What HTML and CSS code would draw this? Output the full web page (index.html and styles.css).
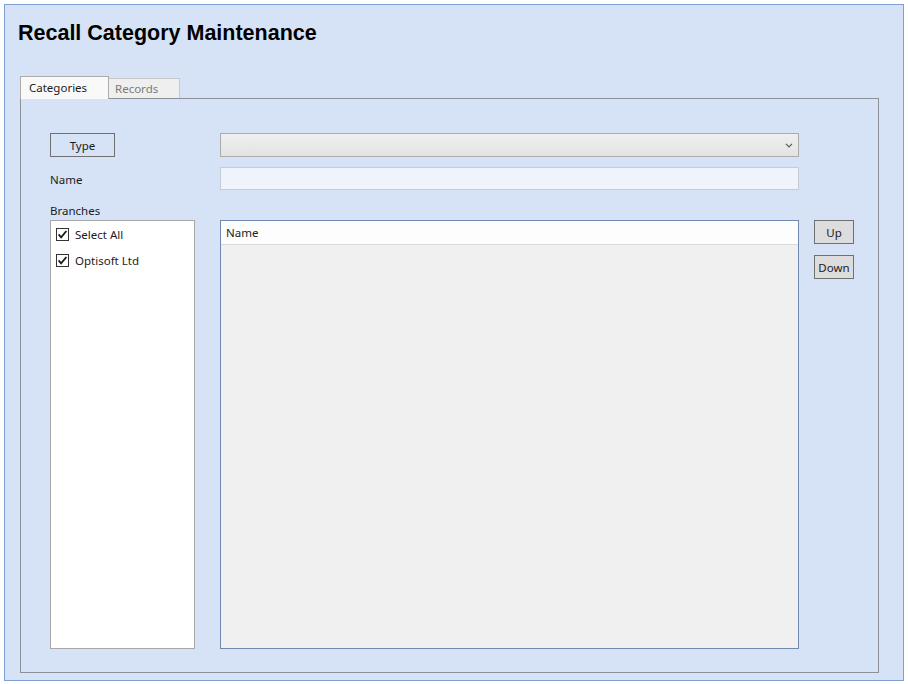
FILE: index.html
```html
<!DOCTYPE html>
<html>
<head>
<meta charset="utf-8">
<title>Recall Category Maintenance</title>
<link rel="stylesheet" href="styles.css">
</head>
<body>
<div class="window">
  <h1 class="title">Recall Category Maintenance</h1>
  <div class="tabs">
    <div class="tabstrip">
      <div class="tab tab-active">Categories</div>
      <div class="tab tab-inactive">Records</div>
    </div>
    <div class="panel">
      <div class="row row-type">
        <div class="label-col"><button class="btn btn-type">Type</button></div>
        <div class="combo">
          <svg class="chev" width="8" height="5" viewBox="0 0 8 5"><path d="M1 0.8 L4 3.8 L7 0.8" fill="none" stroke="#5a5a5a" stroke-width="1.2"/></svg>
        </div>
      </div>
      <div class="row row-name">
        <div class="label-col">Name</div>
        <div class="textbox"></div>
      </div>
      <div class="branches-label">Branches</div>
      <div class="main">
        <div class="list">
          <div class="item">
            <svg class="check" width="13" height="13" viewBox="0 0 13 13"><rect x="0.5" y="0.5" width="12" height="12" fill="#fff" stroke="#333"/><path d="M2.6 6.4 L5.1 9.3 L10.4 3" fill="none" stroke="#1a1a1a" stroke-width="1.8"/></svg>
            <span>Select All</span>
          </div>
          <div class="item">
            <svg class="check" width="13" height="13" viewBox="0 0 13 13"><rect x="0.5" y="0.5" width="12" height="12" fill="#fff" stroke="#333"/><path d="M2.6 6.4 L5.1 9.3 L10.4 3" fill="none" stroke="#1a1a1a" stroke-width="1.8"/></svg>
            <span>Optisoft Ltd</span>
          </div>
        </div>
        <div class="grid">
          <div class="grid-header">Name</div>
        </div>
        <div class="side-buttons">
          <button class="btn btn-side">Up</button>
          <button class="btn btn-side">Down</button>
        </div>
      </div>
    </div>
  </div>
</div>
</body>
</html>
```
FILE: styles.css
```css
html, body {
  margin: 0;
  padding: 0;
  background: #ffffff;
  overflow: hidden;
}
body {
  font-family: "Noto Sans", "Open Sans", sans-serif;
  font-size: 11.5px;
  color: #1b1b1b;
}
.window {
  margin: 4px 4px 0 4px;
  height: 677px;
  box-sizing: border-box;
  border: 1px solid #7f9fd2;
  background: #d6e3f6;
  padding: 16px 24px 7px 15px;
  display: flex;
  flex-direction: column;
}
.title {
  margin: 0 0 31px -2px;
  font-family: "Liberation Sans", Arial, sans-serif;
  font-size: 21.5px;
  line-height: 24px;
  font-weight: bold;
  color: #000;
}
.tabs {
  flex: 1;
  display: flex;
  flex-direction: column;
}
.tabstrip {
  display: flex;
  align-items: flex-end;
  height: 22px;
}
.tab {
  box-sizing: border-box;
  line-height: 18px;
}
.tab-active {
  width: 89px;
  height: 23px;
  margin-bottom: -1px;
  position: relative;
  z-index: 1;
  background: #f9f9f9;
  border: 1px solid #acacac;
  border-bottom: none;
  padding: 2px 0 0 8px;
  color: #1b1b1b;
}
.tab-inactive {
  width: 71px;
  height: 20px;
  background: #efefef;
  border: 1px solid #c8c8c8;
  border-left: none;
  border-bottom: none;
  padding: 1px 0 0 6px;
  color: #7a7a7a;
}
.panel {
  flex: 1;
  border: 1px solid #8b9099;
  padding: 34px 0 23px 29px;
  display: flex;
  flex-direction: column;
}
.row {
  display: flex;
  align-items: center;
}
.row-name {
  margin-top: 10px;
}
.label-col {
  width: 170px;
  flex-shrink: 0;
  padding-top: 2px;
  box-sizing: border-box;
}
.row-type .label-col {
  padding-top: 0;
}
.btn {
  font-family: "Noto Sans", "Open Sans", sans-serif;
  font-size: 11.5px;
  color: #1b1b1b;
  box-sizing: border-box;
  border: 1px solid #707070;
  padding: 0;
  margin: 0;
}
.btn-type {
  width: 65px;
  height: 24px;
  background: #d6e3f6;
}
.combo {
  width: 579px;
  height: 24px;
  box-sizing: border-box;
  border: 1px solid #acacac;
  background: linear-gradient(#efefef, #e3e3e3);
  display: flex;
  align-items: center;
  justify-content: flex-end;
  padding-right: 5px;
}
.textbox {
  width: 579px;
  height: 23px;
  box-sizing: border-box;
  border: 1px solid #c4ccd8;
  background: #eef3fc;
}
.branches-label {
  margin: 13px 0 1px;
  line-height: 16px;
}
.main {
  flex: 1;
  display: flex;
  align-items: flex-start;
}
.list {
  width: 145px;
  height: 100%;
  box-sizing: border-box;
  border: 1px solid #a8a8a8;
  background: #ffffff;
  padding: 7px 0 0 5px;
  display: flex;
  flex-direction: column;
  gap: 13px;
}
.item {
  display: flex;
  align-items: center;
  height: 13px;
  line-height: 13px;
}
.check {
  margin-right: 6px;
  flex-shrink: 0;
}
.grid {
  margin-left: 25px;
  width: 579px;
  height: 100%;
  box-sizing: border-box;
  border: 1px solid #6f89b0;
  background: #f0f0f0;
}
.grid-header {
  height: 24px;
  box-sizing: border-box;
  background: #fdfdfd;
  border-bottom: 1px solid #d9d9d9;
  padding-left: 5px;
  line-height: 24px;
}
.side-buttons {
  margin-left: 15px;
  display: flex;
  flex-direction: column;
  gap: 11px;
}
.btn-side {
  width: 40px;
  height: 24px;
  background: #dddddd;
}
```
